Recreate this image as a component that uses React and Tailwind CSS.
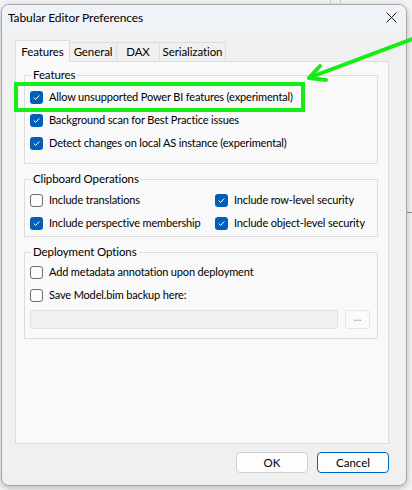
import React from 'react';

const FONT = { fontFamily: 'Lato, "Noto Sans", sans-serif' };

function Check({ checked }) {
  if (checked) {
    return (
      <span className="flex h-[13px] w-[13px] shrink-0 items-center justify-center rounded-[3px] bg-[#005fb8]">
        <svg width="9" height="9" viewBox="0 0 9 9" fill="none">
          <path d="M2 4.8 L3.7 6.4 L7 2.8" stroke="white" strokeWidth="1" strokeLinecap="round" strokeLinejoin="round" />
        </svg>
      </span>
    );
  }
  return <span className="h-[13px] w-[13px] shrink-0 rounded-[3px] border border-[#6b6b6b] bg-[#fbfbfb]" />;
}

function Option({ checked, children }) {
  return (
    <div className="flex h-[23px] items-center gap-[6px] whitespace-nowrap text-[11px] tracking-[-0.15px] text-black">
      <Check checked={checked} />
      <span>{children}</span>
    </div>
  );
}

function Group({ title, className = '', children }) {
  return (
    <fieldset className={`border border-[#dcdcdc] px-[5px] ${className}`}>
      <legend className="ml-[1px] px-[2px] text-[11.5px] leading-[16px] tracking-[-0.1px] text-black">{title}</legend>
      {children}
    </fieldset>
  );
}

const TABS = ['Features', 'General', 'DAX', 'Serialization'];

export default function App() {
  return (
    <div className="relative h-[490px] w-[412px] overflow-hidden bg-[#f3f3f3]" style={FONT}>
      {/* backdrop bits behind the dialog */}
      <div className="absolute left-[330px] top-0 h-[5px] w-px bg-[#c8c8c8]" />
      <div className="absolute left-[340px] top-0 h-[5px] w-px bg-[#c8c8c8]" />
      <div className="absolute right-0 top-[212px] h-px w-[5px] bg-[#8a8a8a]" />

      <div className="ml-[1px] mt-[4px] flex h-[482px] w-[406px] flex-col overflow-hidden rounded-[8px] border border-[#a8a8a8] bg-[#f0f0f0] shadow-[0_2px_6px_rgba(0,0,0,0.25)]">
        {/* title bar */}
        <div className="flex h-[25px] shrink-0 items-center justify-between bg-[#eff3f8] pl-[6px] pr-[9px]">
          <span className="text-[12px] tracking-[-0.1px] text-black">Tabular Editor Preferences</span>
          <svg width="11" height="11" viewBox="0 0 11 11">
            <path d="M0.5 0.5 L10.5 10.5 M10.5 0.5 L0.5 10.5" stroke="#1a1a1a" strokeWidth="1" />
          </svg>
        </div>

        <div className="flex flex-1 flex-col px-[13px] pt-[11px]">
          {/* tabs */}
          <div className="flex h-[20px] items-end">
            {TABS.map((t, i) =>
              i === 0 ? (
                <div key={t} className="relative z-10 -mb-px flex h-[22px] w-[55px] items-center justify-center border border-b-0 border-[#dcdcdc] bg-[#f9f9f9] text-[11.5px] tracking-[-0.1px] text-black">
                  {t}
                </div>
              ) : (
                <div key={t} className={`flex h-[19px] items-center justify-center border border-l-0 border-b-0 border-[#dcdcdc] bg-[#f0f0f0] text-[11.5px] tracking-[-0.1px] text-black ${i === 1 ? 'w-[47px]' : i === 2 ? 'w-[43px]' : 'w-[66px]'}`}>
                  {t}
                </div>
              )
            )}
          </div>

          {/* tab panel */}
          <div className="flex h-[383px] w-[374px] flex-col border border-[#dcdcdc] bg-[#f9f9f9] pl-[8px] pr-[10px] pt-[5px]">
            <Group title="Features" className="pb-[8px]">
              <div className="pt-[3px]">
                <Option checked>Allow unsupported Power BI features (experimental)</Option>
                <Option checked>Background scan for Best Practice issues</Option>
                <Option checked>Detect changes on local AS instance (experimental)</Option>
              </div>
            </Group>

            <Group title="Clipboard Operations" className="mt-[7px] pb-[1px]">
              <div className="grid grid-cols-[185px_1fr] pt-[2px]">
                <Option>Include translations</Option>
                <Option checked>Include row-level security</Option>
                <Option checked>Include perspective membership</Option>
                <Option checked>Include object-level security</Option>
              </div>
            </Group>

            <Group title="Deployment Options" className="mt-[7px] pb-[9px]">
              <div className="pt-[1px]">
                <Option>Add metadata annotation upon deployment</Option>
                <Option>Save Model.bim backup here:</Option>
                <div className="mt-[3px] flex gap-[7px]">
                  <div className="h-[19px] w-[308px] rounded-[2px] border border-[#e2e2e2] bg-[#f0f0f0]" />
                  <div className="flex h-[19px] w-[25px] items-center justify-center rounded-[3px] border border-[#e5e5e5] bg-[#fbfbfb] pb-[4px] text-[11px] text-[#8a8a8a]">
                    ...
                  </div>
                </div>
              </div>
            </Group>
          </div>

          {/* buttons */}
          <div className="mt-[8px] flex justify-end gap-[9px] pr-[4px]">
            <button className="h-[21px] w-[72px] rounded-[4px] border border-[#d0d0d0] bg-[#fdfdfd] text-[11.5px] text-black">OK</button>
            <button className="h-[21px] w-[72px] rounded-[4px] border border-[#0067c0] bg-[#fdfdfd] text-[11.5px] text-black">Cancel</button>
          </div>
        </div>
      </div>

      {/* annotation: highlight box and arrow */}
      <div className="pointer-events-none absolute left-[14px] top-[82px] h-[30px] w-[291px] border-[4px] border-[#14ee14]" />
      <svg className="pointer-events-none absolute left-0 top-0" width="412" height="490">
        <g stroke="#14ee14" strokeWidth="4" strokeLinecap="round" fill="none">
          <path d="M415 38 L311 77" />
          <path d="M309 78 L320 66" />
          <path d="M309 78 L326 80" />
        </g>
      </svg>
    </div>
  );
}
